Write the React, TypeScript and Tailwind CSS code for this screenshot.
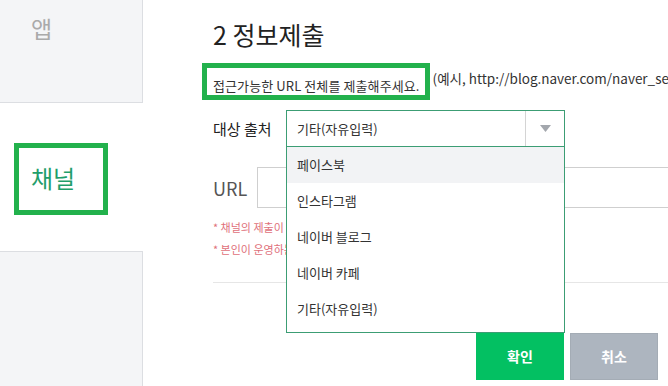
const options = ['페이스북', '인스타그램', '네이버 블로그', '네이버 카페', '기타(자유입력)'];

const App = () => {
  return (
    <div
      className="flex h-[386px] w-[668px] overflow-hidden bg-white text-[#333]"
      style={{ fontFamily: '"Noto Sans CJK KR", "Noto Sans", sans-serif' }}
    >
      {/* tabs */}
      <div className="flex w-[143px] shrink-0 flex-col">
        <div className="h-[103px] border-r border-b border-[#dcdee2] bg-[#f4f5f7] pl-[31px] pt-[11px]">
          <span className="text-[23px] leading-[34px] text-[#aaaaaa]">앱</span>
        </div>
        <div className="h-[148px] pl-[14px] pt-[40px]">
          <div className="flex h-[72px] w-[94px] items-center border-[5px] border-[#22b14c] pl-[12px] pb-[2px]">
            <span className="text-[24px] leading-[30px] text-[#1f9e6b]">채널</span>
          </div>
        </div>
        <div className="flex-1 border-t border-r border-[#dcdee2] bg-[#f4f5f7]" />
      </div>

      {/* form */}
      <div className="flex min-w-0 flex-1 flex-col pl-[70px]">
        <h1 className="pt-[16px] text-[25px] font-normal leading-[36px] text-[#222] whitespace-nowrap">2 정보제출</h1>

        <div className="-ml-[11px] mt-[11px] flex h-[37px] items-start whitespace-nowrap">
          <div className="h-[37px] shrink-0 border-[5px] border-[#22b14c] pl-[6px] pr-[5px] pt-[4px]">
            <span className="text-[13px] leading-[23px] tracking-[0.1px] text-[#333]">
              접근가능한 URL 전체를 제출해주세요.
            </span>
          </div>
          <span className="ml-[3px] mt-[4px] text-[13.5px] leading-[23px] text-[#333]">
            (예시, http://blog.naver.com/naver_search_blog)
          </span>
        </div>

        <div className="mt-[10px] flex items-center">
          <span className="w-[73px] shrink-0 text-[15px] leading-[22px] text-[#222]">대상 출처</span>
          <div className="relative z-10 w-[279px] shrink-0">
            <div className="flex h-[37px] items-center border border-[#3c9d74] bg-white">
              <span className="flex-1 pl-[10px] text-[13px] text-[#333]">기타(자유입력)</span>
              <div className="flex h-full w-[39px] items-center justify-center border-l border-[#d4d4d4]">
                <svg width="11" height="7" viewBox="0 0 11 7">
                  <path d="M0 0 H11 L5.5 7 Z" fill="#a3a7ad" />
                </svg>
              </div>
            </div>
            <ul className="absolute left-0 top-full w-full border-x border-b border-[#3c9d74] bg-white pb-[5px]">
              {options.map((option, index) => (
                <li
                  key={option}
                  className={
                    'flex h-9 items-center pl-[10px] text-[13px] text-[#333] ' +
                    (index === 0 ? 'bg-[#f2f3f5]' : 'bg-white')
                  }
                >
                  {option}
                </li>
              ))}
            </ul>
          </div>
        </div>

        <div className="mt-[20px] flex items-center">
          <span className="w-[44px] shrink-0 text-[18px] leading-[26px] text-[#555]">URL</span>
          <div className="h-[41px] w-[460px] shrink-0 border border-[#cfcfcf] bg-white" />
        </div>

        <div className="mt-[8px] text-[11px] leading-[22px] text-[#e0707a] whitespace-nowrap">
          <p>* 채널의 제출이 완료되면 검수 후 결과를 알려드립니다.</p>
          <p>* 본인이 운영하는 채널이 아닌 경우 정보 제출이 반려 처리될 수 있습니다.</p>
        </div>

        <div className="mt-[22px] border-t border-[#e6e6e6]" />

        <div className="mt-[50px] flex justify-end gap-[6px] pr-[10px]">
          <button className="h-[47px] w-[88px] bg-[#03c062] text-[14px] font-bold text-white">확인</button>
          <button className="h-[47px] w-[88px] border border-[#a4acb5] bg-[#adb5bf] text-[14px] font-bold text-white">
            취소
          </button>
        </div>
      </div>
    </div>
  );
};

export default App;
